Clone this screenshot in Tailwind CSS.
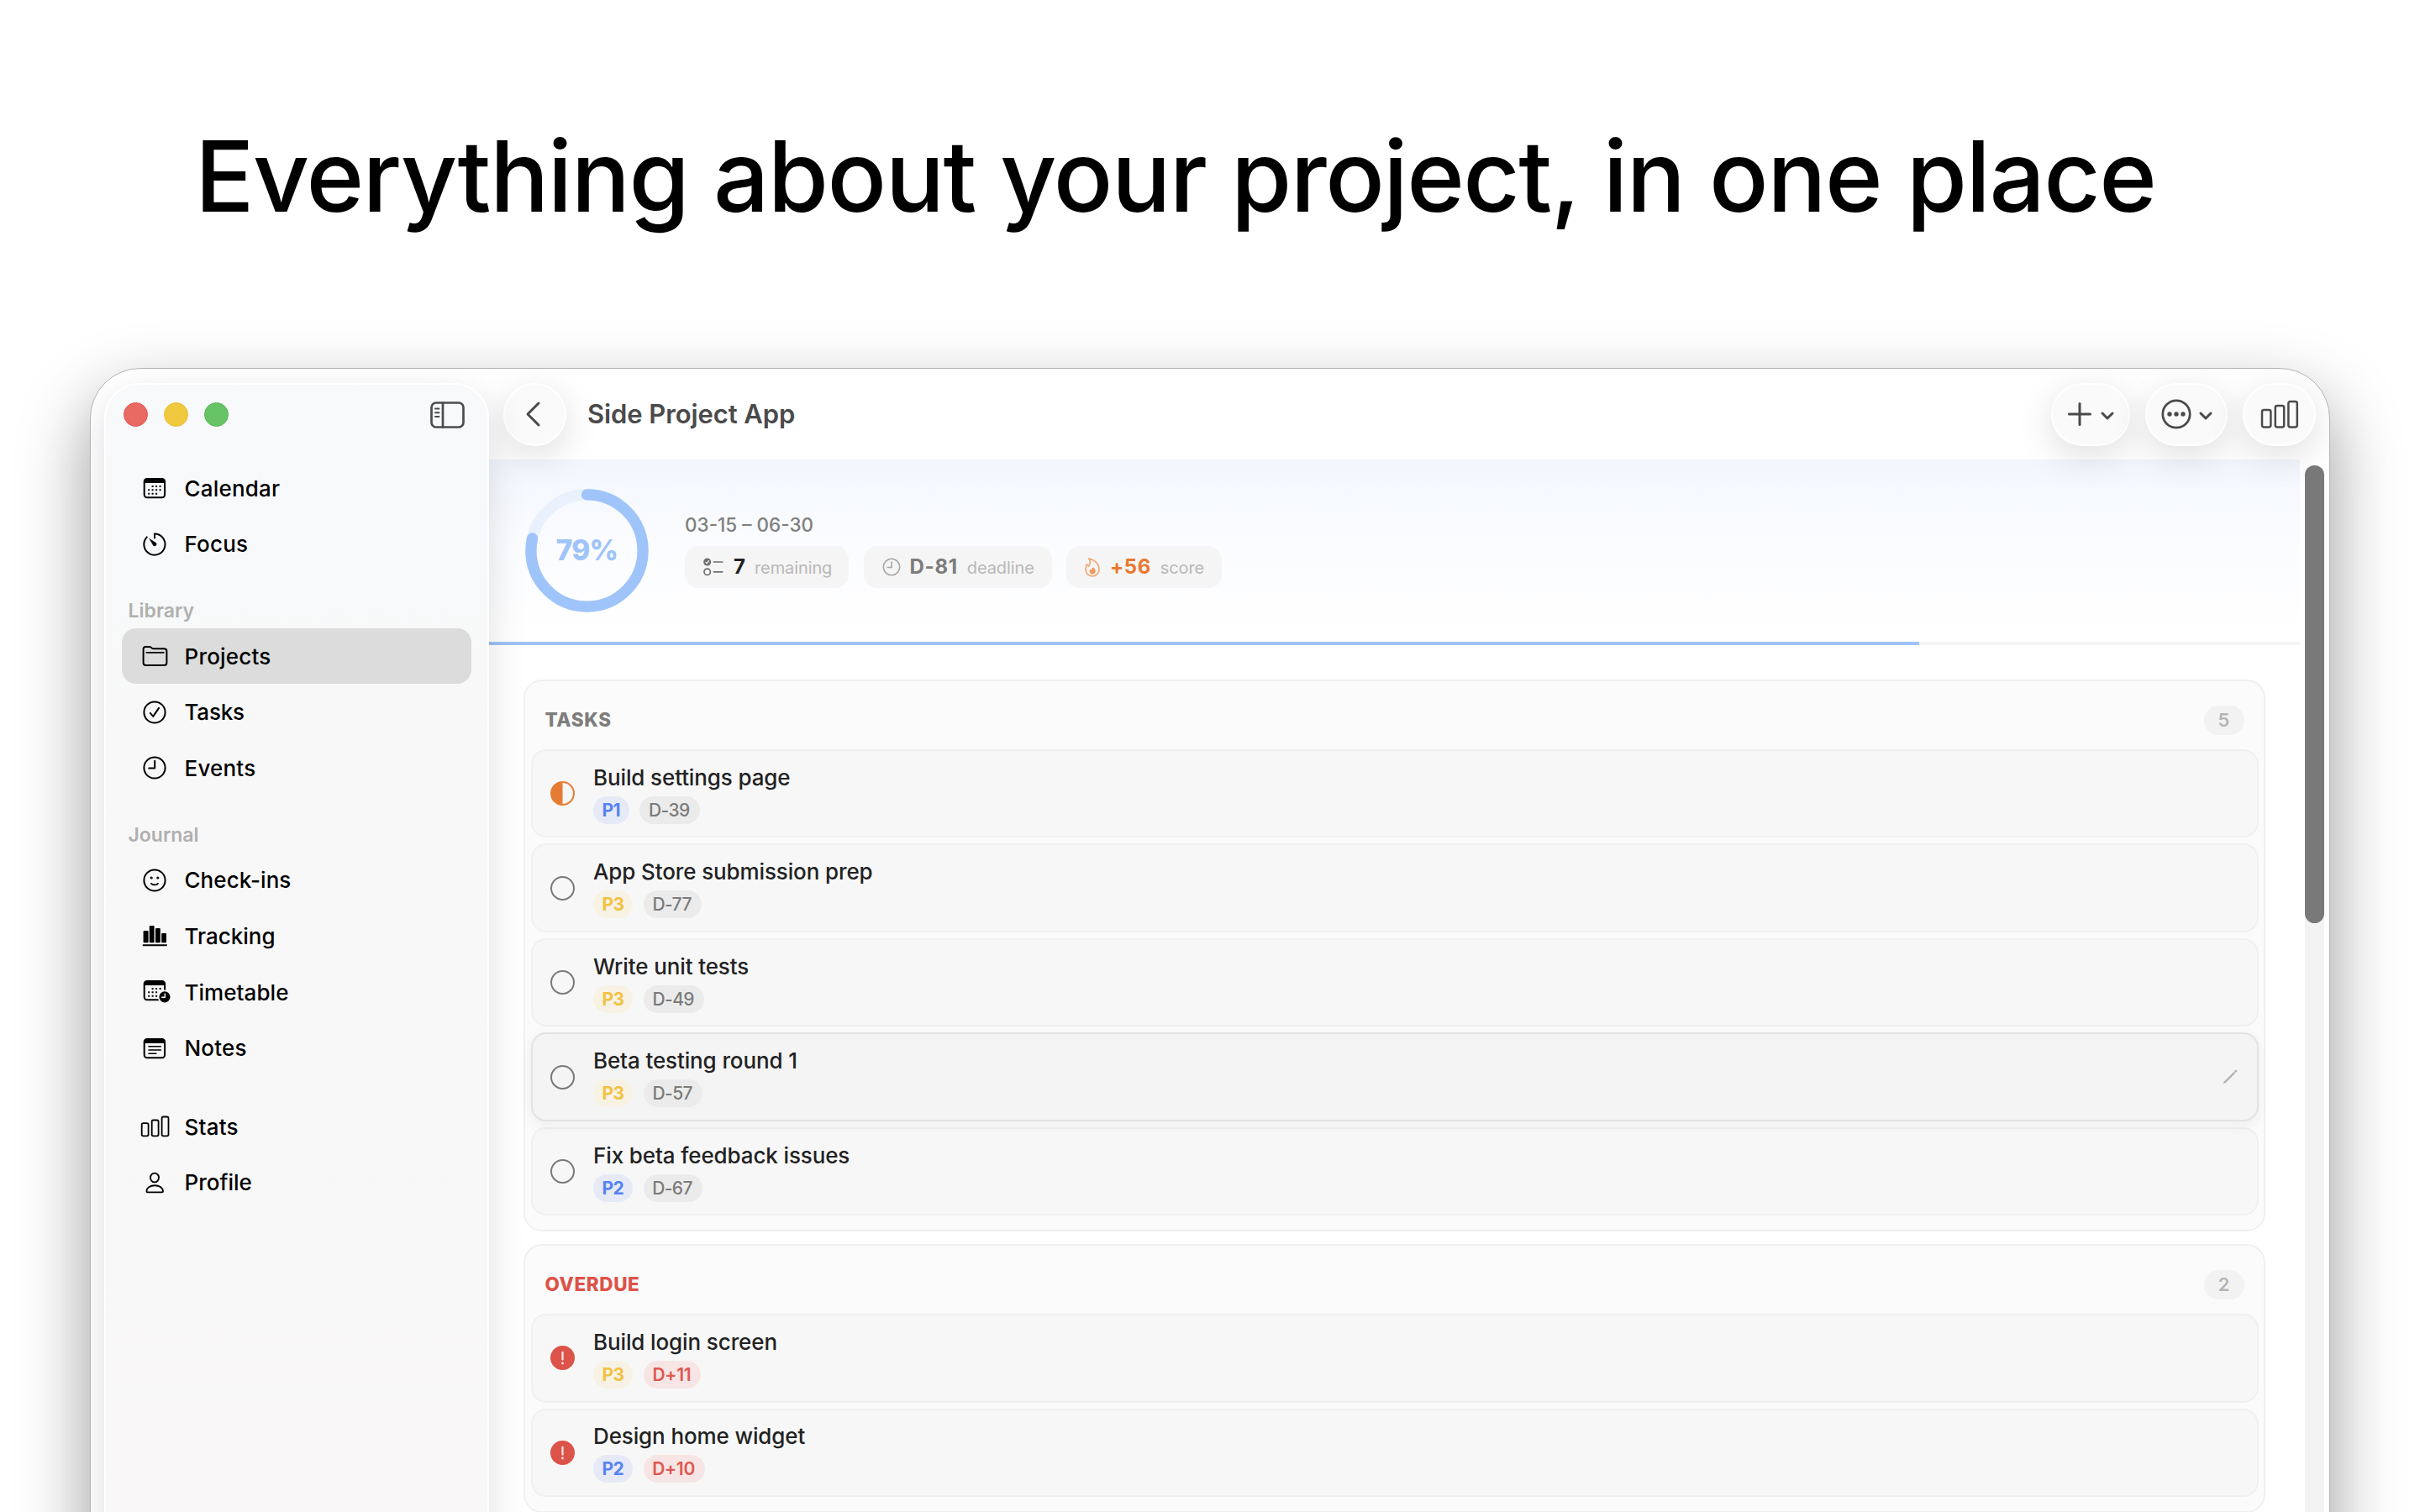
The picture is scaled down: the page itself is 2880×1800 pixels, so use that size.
<!DOCTYPE html>
<html lang="en">
<head>
  <meta charset="UTF-8" />
  <meta name="viewport" content="width=device-width, initial-scale=1.0"/>
  <title>Side Project App</title>

  <!-- Tailwind CSS -->
  <script src="https://cdn.jsdelivr.net/npm/@tailwindcss/browser@4"></script>

  <style>
    body {
      font-family: Inter, sans-serif;
    }
  </style>
</head>
<body class="bg-white text-black w-[2880px] h-[1800px] overflow-hidden">

  <!-- Headline -->
  <header class="h-[438px] pt-[139px] pl-[232px]">
    <h1 class="text-[117px] leading-[141px] font-medium tracking-[-1.58px] whitespace-nowrap">Everything about your project, in one place</h1>
  </header>

  <!-- App window -->
  <div class="ml-[107px] w-[2666px] h-[1500px] flex rounded-[60px] border border-[#b4b4b4] bg-white shadow-[0_36px_84px_rgba(0,0,0,0.4)] overflow-hidden">

    <!-- Sidebar -->
    <aside class="relative z-20 w-[474px] shrink-0 pt-[17px] pl-4">
      <div class="h-[1470px] rounded-[42px] border-2 border-white bg-linear-to-b from-[#f7f9fb] via-[#f8f8f8] via-30% to-[#f9f7f8] shadow-[0_14px_44px_rgba(0,0,0,0.13)]">
        <div class="h-[71px] flex items-center pl-[21px] pr-[27px] gap-[19px]">
          <span class="size-[29px] rounded-full bg-[#e96a62] border border-[#e0554f]"></span>
          <span class="size-[29px] rounded-full bg-[#f0c93f] border border-[#e6bb33]"></span>
          <span class="size-[29px] rounded-full bg-[#67c466] border border-[#57b556]"></span>
          <svg class="ml-auto w-[41px] h-[32px]" viewBox="0 0 41 32" fill="none" stroke="#4c4c4c" stroke-width="2.7" stroke-linecap="round">
            <rect x="1.5" y="1.5" width="38" height="29" rx="5.5"/>
            <path d="M15 1.5v29"/>
            <path d="M6 8.5h4.5M6 13.3h4.5M6 18h4.5" stroke-width="2"/>
          </svg>
        </div>

        <nav class="mt-[18.8px] ml-[18.5px] mr-[19px] text-[26px] font-medium tracking-[0.2px]">
          <a class="h-[66.67px] flex items-center pl-[19px] gap-[16px]">
            <svg class="size-10" viewBox="0 0 40 40" fill="none" stroke="#000" stroke-width="2">
              <rect x="7.7" y="9" width="24.4" height="22.3" rx="3.2"/>
              <path d="M8 11a2 2 0 0 1 2-2h20a2 2 0 0 1 2 2v3H8z" fill="#000" stroke="none"/>
              <g fill="#000" stroke="none"><path d="M16.6 17h2v2h-2zM21.1 17h2v2h-2zM25.6 17h2v2h-2zM12.2 21.3h2v2h-2zM16.6 21.3h2v2h-2zM21.1 21.3h2v2h-2zM25.6 21.3h2v2h-2zM12.2 25.7h2v2h-2zM16.6 25.7h2v2h-2zM21.1 25.7h2v2h-2z"/></g>
            </svg>
            <span>Calendar</span>
          </a>
          <a class="h-[66.67px] flex items-center pl-[19px] gap-[16px]">
            <svg class="size-10" viewBox="0 0 40 40" fill="none" stroke="#000" stroke-width="2" stroke-linecap="round">
              <path d="M20 12.5V7.5A12.6 12.6 0 1 1 10.8 11.4"/>
              <path d="M14 13.6l7.8 5a2.2 2.2 0 0 1-2.9 3.1z" fill="#000" stroke-width=".6" stroke-linejoin="round"/>
            </svg>
            <span>Focus</span>
          </a>

          <div class="h-[66.67px] flex items-center pt-[26px] pl-2 text-[23px] font-semibold tracking-normal text-[#b0b0b0]">Library</div>
          <a class="h-[66.67px] flex items-center pl-[19px] gap-[16px] rounded-[17px] bg-[#dcdcdc]">
            <svg class="size-10" viewBox="0 0 40 40" fill="none" stroke="#000" stroke-width="2" stroke-linejoin="round" stroke-linecap="round">
              <path d="M6.6 28V11.8c0-2 1-2.9 2.8-2.9h4.2c1 0 1.6.3 2.3.9l.8.7c.6.5 1.1.7 2 .7h12.6c2 0 3.1 1 3.1 3V28c0 2-1 3-3 3H9.6c-2 0-3-1-3-3z"/>
              <path d="M10.4 15.8h20.4" stroke-width="1.8"/>
            </svg>
            <span>Projects</span>
          </a>
          <a class="h-[66.67px] flex items-center pl-[19px] gap-[16px]">
            <svg class="size-10" viewBox="0 0 40 40" fill="none" stroke="#000" stroke-width="2" stroke-linecap="round" stroke-linejoin="round">
              <circle cx="20" cy="20" r="12.6"/>
              <path d="M14.8 20.9l3.4 4 6.9-10"/>
            </svg>
            <span class="tracking-[-0.2px]">Tasks</span>
          </a>
          <a class="h-[66.67px] flex items-center pl-[19px] gap-[16px]">
            <svg class="size-10" viewBox="0 0 40 40" fill="none" stroke="#000" stroke-width="2" stroke-linecap="round" stroke-linejoin="round">
              <circle cx="20" cy="20" r="12.6"/>
              <path d="M20.2 11.8v8.8h-7"/>
            </svg>
            <span>Events</span>
          </a>

          <div class="h-[66.67px] flex items-center pt-[26px] pl-2 text-[23px] font-semibold tracking-normal text-[#b0b0b0]">Journal</div>
          <a class="h-[66.67px] flex items-center pl-[19px] gap-[16px]">
            <svg class="size-10" viewBox="0 0 40 40" fill="none" stroke="#000" stroke-width="2" stroke-linecap="round">
              <circle cx="20" cy="20" r="12.6"/>
              <g fill="#000" stroke="none"><circle cx="16.2" cy="17" r="1.6"/><circle cx="23.8" cy="17" r="1.6"/></g>
              <path d="M16 23.8c2 2.1 6 2.1 8 0" stroke-width="1.8"/>
            </svg>
            <span class="tracking-[0.05px]">Check-ins</span>
          </a>
          <a class="h-[66.67px] flex items-center pl-[19px] gap-[16px]">
            <svg class="size-10" viewBox="0 0 40 40" fill="#000">
              <rect x="6.6" y="14" width="6" height="14.3" rx="1"/>
              <rect x="13.8" y="8" width="5.8" height="20.3" rx="1"/>
              <rect x="21" y="11" width="5.8" height="17.3" rx="1"/>
              <rect x="28.2" y="17" width="5.8" height="11.3" rx="1"/>
              <rect x="5.6" y="30.2" width="29.4" height="2" rx="1"/>
            </svg>
            <span class="tracking-normal">Tracking</span>
          </a>
          <a class="h-[66.67px] flex items-center pl-[19px] gap-[16px]">
            <svg class="size-10" viewBox="0 2 40 40" fill="none" stroke="#000" stroke-width="2">
              <rect x="7.7" y="9" width="24.4" height="22.3" rx="3.2"/>
              <path d="M8 11a2 2 0 0 1 2-2h20a2 2 0 0 1 2 2v3H8z" fill="#000" stroke="none"/>
              <g fill="#000" stroke="none"><path d="M16.6 17h2v2h-2zM21.1 17h2v2h-2zM25.6 17h2v2h-2zM12.2 21.3h2v2h-2zM16.6 21.3h2v2h-2zM21.1 21.3h2v2h-2zM12.2 25.7h2v2h-2zM16.6 25.7h2v2h-2zM21.1 25.7h2v2h-2z"/></g>
              <circle cx="32" cy="27.8" r="7.4" fill="#000" stroke="#f8f8f8" stroke-width="1.6"/>
              <path d="M32.3 24v4.2h-3.6" stroke="#f8f8f8" stroke-width="1.4" stroke-linecap="round"/>
            </svg>
            <span class="tracking-[0.05px]">Timetable</span>
          </a>
          <a class="h-[66.67px] flex items-center pl-[19px] gap-[16px]">
            <svg class="size-10" viewBox="0 0 40 40" fill="none" stroke="#000" stroke-width="2">
              <rect x="7.7" y="9" width="24.4" height="22.3" rx="3.2"/>
              <path d="M8 11a2 2 0 0 1 2-2h20a2 2 0 0 1 2 2v3H8z" fill="#000" stroke="none"/>
              <path d="M13 17.8h14.4M13 22h14.4M13 26.2h8.8" stroke-width="1.6" stroke-linecap="round"/>
            </svg>
            <span>Notes</span>
          </a>

          <a class="mt-[26.7px] h-[66.67px] flex items-center pl-[19px] gap-[16px]">
            <svg class="size-10" viewBox="0 0 40 40" fill="none" stroke="#000" stroke-width="1.8">
              <rect x="4.7" y="16.2" width="7.9" height="15.2" rx="1.8"/>
              <rect x="16.7" y="12.5" width="7.9" height="18.9" rx="1.8"/>
              <rect x="28.6" y="8.5" width="7.9" height="22.9" rx="1.8"/>
            </svg>
            <span>Stats</span>
          </a>
          <a class="h-[66.67px] flex items-center pl-[19px] gap-[16px]">
            <svg class="size-10" viewBox="0 0 40 40" fill="none" stroke="#000" stroke-width="1.9" stroke-linejoin="round">
              <ellipse cx="20" cy="14" rx="5" ry="5.4"/>
              <path d="M10.4 30c0-3.6 4-6.8 9.8-6.8s9.8 3.2 9.8 6.8c0 .9-.4 1.4-1.4 1.4H11.800c-1 0-1.4-.5-1.4-1.4z"/>
            </svg>
            <span class="tracking-normal">Profile</span>
          </a>
        </nav>
      </div>
    </aside>

    <!-- Main -->
    <main class="w-[2190px] shrink-0">

      <!-- Toolbar -->
      <div class="relative z-10 h-[108px] flex items-center pl-[17px] pr-4 text-[#4a4a4a]">
        <button class="size-[75px] rounded-full border-2 border-white bg-[#fafafa] shadow-[0_12px_44px_rgba(0,0,0,0.13)] flex items-center justify-center">
          <svg class="w-5 h-8 mr-[5px]" viewBox="0 0 20 32" fill="none" stroke="currentColor" stroke-width="3" stroke-linecap="round" stroke-linejoin="round"><path d="M17 3L4 16l13 13"/></svg>
        </button>
        <h2 class="ml-[25px] pt-px text-[31px] font-semibold tracking-[-0.1px]">Side Project App</h2>

        <button class="ml-auto w-[94px] h-[75px] rounded-full border-2 border-white bg-[#fafafa] shadow-[0_12px_44px_rgba(0,0,0,0.13)] flex items-center justify-center gap-[10px]">
          <svg class="size-[30px]" viewBox="0 0 30 30" fill="none" stroke="currentColor" stroke-width="3" stroke-linecap="round"><path d="M15 2.5v25M2.5 15h25"/></svg>
          <svg class="w-4 h-3 mt-[3px]" viewBox="0 0 16 12" fill="none" stroke="currentColor" stroke-width="3" stroke-linecap="round" stroke-linejoin="round"><path d="M2 3l6 6 6-6"/></svg>
        </button>
        <button class="ml-[18px] w-[98px] h-[75px] rounded-full border-2 border-white bg-[#fafafa] shadow-[0_12px_44px_rgba(0,0,0,0.13)] flex items-center justify-center gap-[9px]">
          <svg class="size-9" viewBox="0 0 36 36"><circle cx="18" cy="18" r="16.2" fill="none" stroke="currentColor" stroke-width="2.7"/><g fill="currentColor"><circle cx="10" cy="18" r="2.7"/><circle cx="18" cy="18" r="2.7"/><circle cx="26" cy="18" r="2.7"/></g></svg>
          <svg class="w-4 h-3 mt-[3px]" viewBox="0 0 16 12" fill="none" stroke="currentColor" stroke-width="3" stroke-linecap="round" stroke-linejoin="round"><path d="M2 3l6 6 6-6"/></svg>
        </button>
        <button class="ml-[18px] w-[87px] h-[75px] rounded-full border-2 border-white bg-[#fafafa] shadow-[0_12px_44px_rgba(0,0,0,0.13)] flex items-center justify-center">
          <svg class="w-[46px] h-[34px]" viewBox="0 0 46 34" fill="none" stroke="currentColor" stroke-width="2.5">
            <rect x="2" y="12" width="10.4" height="20.5" rx="2.2"/>
            <rect x="17.8" y="7" width="10.4" height="25.5" rx="2.2"/>
            <rect x="33.4" y="2" width="10.4" height="30.5" rx="2.2"/>
          </svg>
        </button>
      </div>

      <div class="flex">
        <div class="w-[2155px]">
          <!-- Project summary -->
          <section class="h-[217px] flex items-center pl-[43px] gap-[43px] bg-linear-to-b from-[#f2f6fd] via-[#fbfcff] via-45% to-white">
            <div class="relative size-[147px] flex items-center justify-center">
              <svg class="absolute inset-0 size-[147px] -rotate-90" viewBox="0 0 147 147" fill="none" stroke-width="13.3">
                <circle cx="73.5" cy="73.5" r="66.6" stroke="#e9f1fd"/>
                <circle cx="73.5" cy="73.5" r="66.6" stroke="#9fc4fa" stroke-linecap="round" pathLength="100" stroke-dasharray="78.5 100"/>
              </svg>
              <span class="text-[33.5px] font-extrabold tracking-[-0.8px] text-[#9fc4fa]">79%</span>
            </div>
            <div class="flex flex-col gap-[14px]">
              <div class="text-[22.5px] leading-[25px] pt-px -mb-px font-medium text-[#808080]">03-15 – 06-30</div>
              <div class="flex gap-[17.5px]">
                <div class="w-[195px] h-[50px] rounded-2xl bg-[#f5f5f5] flex items-center pl-[22px]">
                  <svg class="w-6 h-6 mr-[12px]" viewBox="0 0 24 24" fill="none" stroke="#6e6e6e" stroke-width="1.7" stroke-linecap="round">
                    <circle cx="4.7" cy="6" r="4.5" fill="#6e6e6e" stroke="none"/>
                    <path d="M3 6.3l1.300 1.4L6.6 4.4" stroke="#f5f5f5" stroke-width="1.2"/>
                    <circle cx="4.7" cy="17.8" r="3.7"/>
                    <path d="M12.5 6h10.300M12.5 17.8h10.300"/>
                  </svg>
                  <div class="flex items-baseline gap-[11px]">
                    <span class="text-[24px] font-bold text-[#222]">7</span>
                    <span class="text-[20px] tracking-[-0.1px] text-[#b8b8b8]">remaining</span>
                  </div>
                </div>
                <div class="w-[224px] h-[50px] rounded-2xl bg-[#f5f5f5] flex items-center pl-[22px]">
                  <svg class="size-[22px] mr-[11px]" viewBox="0 0 22 22" fill="none" stroke="#a6a6a6" stroke-width="1.6" stroke-linecap="round">
                    <circle cx="11" cy="11" r="9.7"/>
                    <path d="M11 5v6.500H6.2"/>
                  </svg>
                  <div class="flex items-baseline gap-[11px]">
                    <span class="text-[24px] font-bold tracking-[0.7px] text-[#7c7c7c]">D-81</span>
                    <span class="text-[20px] tracking-[-0.1px] text-[#b8b8b8]">deadline</span>
                  </div>
                </div>
                <div class="w-[185px] h-[50px] rounded-2xl bg-[#f5f5f5] flex items-center pl-[22px]">
                  <svg class="w-[18px] h-[23px] mr-[12px]" viewBox="0 0 18 23" fill="none" stroke="#f0a878" stroke-width="1.7" stroke-linejoin="round">
                    <path d="M4.8 1c5 .6 12.2 5.8 12.2 12.6 0 4.9-3.3 8.2-8 8.2s-8-3.2-8-7.7c0-2.8 1.2-4.6 1.2-6.3 0 0 1.8.4 2.5 2.3C6.9 7.2 6.4 3.6 4.8 1z"/>
                    <path d="M9.8 11.2c2 1.2 3 2.9 3 4.8 0 2.2-1.5 3.5-3.6 3.5s-3.6-1.3-3.6-3.3c0-1.2.5-2 1.2-2.8.4.7.8 1 1.4 1.3.1-1.4.5-2.6 1.6-3.5z" fill="#ee9a62" stroke="none"/>
                  </svg>
                  <div class="flex items-baseline gap-[11px]">
                    <span class="text-[24px] font-bold tracking-[0.5px] text-[#e9782e]">+56</span>
                    <span class="text-[20px] tracking-[-0.1px] text-[#b8b8b8]">score</span>
                  </div>
                </div>
              </div>
            </div>
          </section>
          <div class="h-1 bg-[#f4f4f4]">
            <div class="h-1 bg-[#9fc2f6]" style="width: 79%"></div>
          </div>

          <!-- Task groups -->
          <div id="groups" class="pt-[41px] pl-[41px] pr-[41px] flex flex-col gap-[15.5px]"></div>
        </div>

        <!-- Scrollbar -->
        <div class="mt-[7px] mx-[6px] w-[23px] h-[1300px] rounded-full bg-[#f3f3f3]">
          <div class="h-[545px] rounded-full bg-[#797979]"></div>
        </div>
      </div>
    </main>
  </div>

  <script>
    const groups = [
      {
        title: 'TASKS', color: 'text-[#7d7d7d]',
        items: [
          { name: 'Build settings page', priority: 'P1', due: 'D-39', status: 'half' },
          { name: 'App Store submission prep', priority: 'P3', due: 'D-77', status: 'open' },
          { name: 'Write unit tests', priority: 'P3', due: 'D-49', status: 'open' },
          { name: 'Beta testing round 1', priority: 'P3', due: 'D-57', status: 'open', hover: true },
          { name: 'Fix beta feedback issues', priority: 'P2', due: 'D-67', status: 'open' }
        ]
      },
      {
        title: 'OVERDUE', color: 'text-[#dc5349]',
        items: [
          { name: 'Build login screen', priority: 'P3', due: 'D+11', status: 'late' },
          { name: 'Design home widget', priority: 'P2', due: 'D+10', status: 'late' }
        ]
      }
    ];

    // Status icons
    const icons = {
      half: '<circle cx="14.5" cy="14.5" r="13.5" fill="none" stroke="#e67c33" stroke-width="2"/><path d="M14.5 1a13.5 13.5 0 0 0 0 27z" fill="#e67c33"/>',
      open: '<circle cx="14.5" cy="14.5" r="13.5" fill="none" stroke="#7a7a7a" stroke-width="2"/>',
      late: '<circle cx="14.5" cy="14.5" r="14.5" fill="#dc5349"/><path d="M14.5 7.8v8.8" stroke="#fbe9e8" stroke-width="2.2" stroke-linecap="round"/><circle cx="14.5" cy="20.9" r="1.4" fill="#fbe9e8"/>'
    };

    // Priority colours
    const priorities = {
      P1: 'bg-[#e6eaf7] text-[#5583f2]',
      P2: 'bg-[#e6eaf7] text-[#5583f2]',
      P3: 'bg-[#f7f2e3] text-[#f1c142]'
    };

    function renderItem(item) {
      const box = item.hover
        ? 'relative border-[#e3e3e3] bg-[#f4f4f4] shadow-[0_4px_16px_rgba(0,0,0,0.06)]'
        : 'border-[#f0f0f0] bg-[#f7f7f7]';
      const due = item.status === 'late'
        ? 'bg-[#f6e5e4] text-[#df5850] font-semibold tracking-[-0.3px]'
        : 'bg-[#ebebeb] text-[#7b7b7b] font-medium tracking-[-0.6px]';
      return `
        <li class="h-[105.3px] flex items-center gap-[22.500px] pl-[21px] pr-[22px] rounded-[18px] border-2 ${box}">
          <svg class="size-[29px] shrink-0" viewBox="0 0 29 29">${icons[item.status]}</svg>
          <div class="flex-1 flex flex-col gap-[6px]">
            <div class="text-[26px] leading-[33px] font-medium tracking-[-0.12px] text-[#222]">${item.name}</div>
            <div class="flex gap-[12.5px] text-[21px] leading-[33px]">
              <span class="pl-[10.5px] pr-[11px] rounded-full font-bold tracking-[-0.6px] ${priorities[item.priority]}">${item.priority}</span>
              <span class="pl-[10.5px] pr-[12px] rounded-full ${due}">${item.due}</span>
            </div>
          </div>
          ${item.hover ? '<svg class="size-5" viewBox="0 0 20 20" fill="none" stroke="#b3b3b3" stroke-width="2.4"><path d="M1.5 18.5l1.6-3.2L14.7 3.7l1.7 1.7L4.8 17z" fill="#b3b3b3" stroke="none"/><path d="M15.9 4.1l2-2"/></svg>' : ''}
        </li>`;
    }

    document.getElementById('groups').innerHTML = groups.map(g => `
      <section class="rounded-[22px] border-2 border-[#f0f0f0] bg-[#fbfbfb] px-[6.5px] pb-[16.6px]">
        <div class="h-[81px] flex items-center justify-between pt-[11px] pl-[17px] pr-[17px]">
          <h3 class="text-[22.5px] font-extrabold tracking-[0.6px] ${g.color}">${g.title}</h3>
          <span class="w-12 h-[35px] rounded-full bg-[#f2f2f2] flex items-center justify-center text-[22px] font-semibold text-[#b5b5b5]">${g.items.length}</span>
        </div>
        <ul class="flex flex-col gap-[7.2px]">${g.items.map(renderItem).join('')}</ul>
      </section>`).join('');
  </script>
</body>
</html>
